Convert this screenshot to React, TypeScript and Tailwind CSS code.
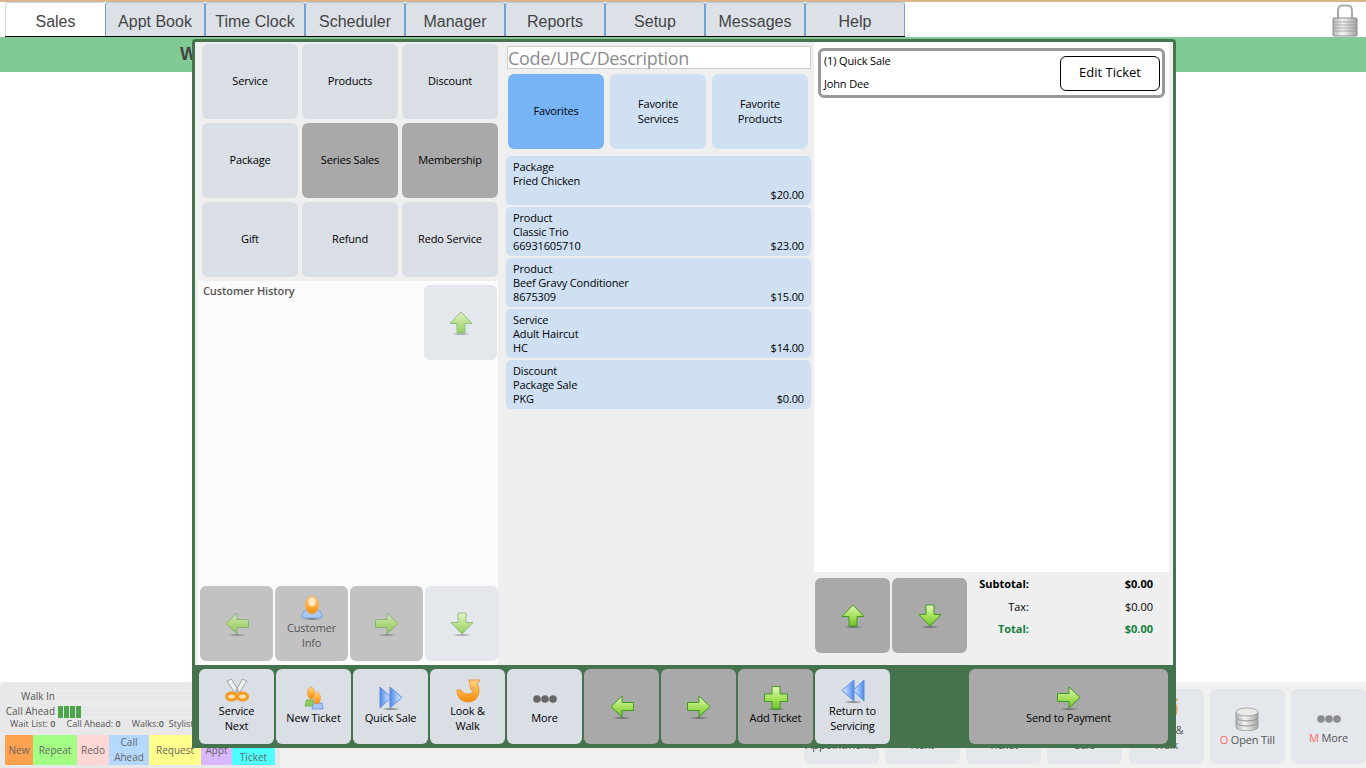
import type { ReactNode } from "react";

const font = "font-['Open_Sans',sans-serif]";

// shared gradients for the glossy icons
function IconDefs() {
  return (
    <svg className="block w-0 h-0" aria-hidden="true">
      <defs>
        <linearGradient id="gh" x1="0" y1="0" x2="0" y2="1">
          <stop offset="0" stopColor="#e2f8ba" />
          <stop offset="0.55" stopColor="#a4e05a" />
          <stop offset="1" stopColor="#72c02c" />
        </linearGradient>
        <linearGradient id="bl" x1="0" y1="0" x2="1" y2="0">
          <stop offset="0" stopColor="#4f86e8" />
          <stop offset="0.6" stopColor="#a9c9fa" />
          <stop offset="1" stopColor="#dce9fd" />
        </linearGradient>
        <linearGradient id="or" x1="0" y1="0" x2="0" y2="1">
          <stop offset="0" stopColor="#ffd08a" />
          <stop offset="0.55" stopColor="#ffae34" />
          <stop offset="1" stopColor="#f08a14" />
        </linearGradient>
        <linearGradient id="sv" x1="0" y1="0" x2="1" y2="0">
          <stop offset="0" stopColor="#b5b5b5" />
          <stop offset="0.4" stopColor="#f4f4f4" />
          <stop offset="1" stopColor="#a5a5a5" />
        </linearGradient>
        <radialGradient id="sh">
          <stop offset="0" stopColor="#444" stopOpacity="0.8" />
          <stop offset="1" stopColor="#444" stopOpacity="0" />
        </radialGradient>
      </defs>
    </svg>
  );
}

const shadow = <ellipse cx="12" cy="23" rx="10" ry="1.3" fill="url(#sh)" />;

const arrowPaths = {
  up: "M12 1 L23 12.5 L16 12.5 L16 22 L8 22 L8 12.5 L1 12.5 Z",
  down: "M8 1 L16 1 L16 10.5 L23 10.5 L12 22 L1 10.5 L8 10.5 Z",
  left: "M12 1 L12 7.5 L23.5 7.5 L23.5 15.5 L12 15.5 L12 22 L1 11.5 Z",
  right: "M12 1 L23 11.5 L12 22 L12 15.5 L.5 15.5 L.5 7.5 L12 7.5 Z",
};

function Arrow({ dir, dim }: { dir: keyof typeof arrowPaths; dim?: boolean }) {
  return (
    <svg width="24" height="24" viewBox="0 0 24 24" className={dim ? "opacity-70" : ""}>
      {shadow}
      <path d={arrowPaths[dir]} fill="url(#gh)" stroke={dim ? "#6fae5c" : "#3f9a1e"} strokeWidth="1" strokeLinejoin="round" />
    </svg>
  );
}

function Scissors() {
  return (
    <svg width="24" height="24" viewBox="0 0 24 24">
      <path d="M2 2 L6.5 0 L13.5 12 L10 14 Z M22 2 L17.5 0 L10.5 12 L14 14 Z" fill="#f0f0f0" stroke="#a2a2a2" strokeWidth="1" />
      <ellipse cx="6.5" cy="17.5" rx="5" ry="3.6" fill="#ffe2b0" stroke="#f59a22" strokeWidth="3" />
      <ellipse cx="17.5" cy="17.5" rx="5" ry="3.6" fill="#ffe2b0" stroke="#f59a22" strokeWidth="3" />
    </svg>
  );
}

function Person() {
  return (
    <svg width="24" height="25" viewBox="0 0 24 25">
      <path d="M2 23 C2 18 4 15 8 14 L16 14 C20 15 22 18 22 23 Z" fill="#a9c8f5" stroke="#7fa3dc" strokeWidth="1" />
      <ellipse cx="12" cy="10" rx="6.5" ry="9" fill="url(#or)" stroke="#f2a04a" strokeWidth="0.7" />
      <ellipse cx="12" cy="7" rx="3.6" ry="4.6" fill="#ffe9c9" />
      <ellipse cx="12" cy="24" rx="10" ry="1" fill="url(#sh)" />
    </svg>
  );
}

function NewTicketIcon() {
  return (
    <svg width="24" height="24" viewBox="0 0 24 24">
      <path d="M3 20 L4.5 14 L11 14 L12 20 Z" fill="#8ed05a" stroke="#5fa335" strokeWidth="0.7" />
      <ellipse cx="9" cy="7" rx="3.4" ry="6" fill="url(#or)" stroke="#e98a20" strokeWidth="0.5" />
      <path d="M10 23 L11.5 17 L20 17 L21 23 Z" fill="#a9c8f5" stroke="#5f8fdc" strokeWidth="0.8" />
      <ellipse cx="15" cy="12" rx="3.4" ry="6" fill="url(#or)" stroke="#e98a20" strokeWidth="0.5" />
    </svg>
  );
}

function DoubleArrow({ flip }: { flip?: boolean }) {
  return (
    <svg width="24" height="24" viewBox="0 0 24 24" className={flip ? "-scale-x-100" : ""}>
      {shadow}
      <path d="M1 1 L12 11.5 L1 22 Z" fill="url(#bl)" stroke="#5d8fe3" strokeWidth="1" strokeLinejoin="round" />
      <path d="M11 1 L23 11.5 L11 22 Z" fill="url(#bl)" stroke="#5d8fe3" strokeWidth="1" strokeLinejoin="round" />
    </svg>
  );
}

function LookWalkIcon() {
  return (
    <svg width="24" height="24" viewBox="0 0 24 24">
      <path d="M1 11 C1 19 6 23 12 23 C19 23 23 18 23 11 C23 8 22 6 21 5 L24 1 L13 1 L15 11 L17 8 C18 12 16 15 12 15 C8 15 6 13 5 11 Z" fill="url(#or)" stroke="#ee8a22" strokeWidth="0.8" strokeLinejoin="round" />
    </svg>
  );
}

function Dots() {
  return (
    <svg width="24" height="10" viewBox="0 0 24 10" className="block">
      <circle cx="4" cy="5" r="3.8" fill="#666" />
      <circle cx="12" cy="5" r="3.8" fill="#666" />
      <circle cx="20" cy="5" r="3.8" fill="#666" />
    </svg>
  );
}

function PlusIcon() {
  return (
    <svg width="24" height="24" viewBox="0 0 24 24">
      {shadow}
      <path d="M8 0.5 H16 V8 H23.5 V15.5 H16 V23 H8 V15.5 H0.5 V8 H8 Z" fill="url(#gh)" stroke="#3f9a1e" strokeWidth="1" />
    </svg>
  );
}

function DbIcon() {
  return (
    <svg width="24" height="26" viewBox="0 0 24 26">
      {[17, 12, 7].map((y) => (
        <g key={y}>
          <path d={`M1 ${y} V${y + 5} C1 ${y + 10} 23 ${y + 10} 23 ${y + 5} V${y} Z`} fill="url(#sv)" stroke="#8f8f8f" strokeWidth="0.7" />
          <ellipse cx="12" cy={y} rx="11" ry="4" fill="#eaeaea" stroke="#8f8f8f" strokeWidth="0.7" />
        </g>
      ))}
    </svg>
  );
}

function LockIcon() {
  return (
    <svg width="26" height="33" viewBox="0 0 26 33">
      <path d="M6 15 V7 Q6 1.5 10 1.5 H16 Q20 1.5 20 7 V15" fill="none" stroke="#a8a8a8" strokeWidth="2" />
      <rect x="1" y="14" width="24" height="18" rx="1" fill="url(#sv)" stroke="#777" strokeWidth="0.8" />
      <path d="M1 18 H25 M1 21 H25 M1 24 H25 M1 27 H25" stroke="#9a9a9a" strokeWidth="0.8" />
    </svg>
  );
}

function Btn({
  children,
  tone = "base",
  className = "",
}: {
  children: ReactNode;
  tone?: "base" | "dark" | "pale" | "mid" | "blue" | "blueOn";
  className?: string;
}) {
  const tones = {
    base: "bg-[#dadee5] text-black",
    dark: "bg-[#a9a9a9] text-black",
    pale: "bg-[#e4e7ec] text-[#555]",
    mid: "bg-[#c2c2c2] text-[#555]",
    blue: "bg-[#cfe0f3] text-black",
    blueOn: "bg-[#77b4f6] text-black",
  };
  return (
    <div
      className={`flex flex-col items-center justify-center rounded-[6px] pb-[2px] text-[11px] leading-[15px] tracking-[-0.15px] text-center ${tones[tone]} ${className}`}
    >
      {children}
    </div>
  );
}

const tabs = ["Sales", "Appt Book", "Time Clock", "Scheduler", "Manager", "Reports", "Setup", "Messages", "Help"];

const menuButtons: { label: string; tone?: "dark" }[] = [
  { label: "Service" },
  { label: "Products" },
  { label: "Discount" },
  { label: "Package" },
  { label: "Series Sales", tone: "dark" },
  { label: "Membership", tone: "dark" },
  { label: "Gift" },
  { label: "Refund" },
  { label: "Redo Service" },
];

const items = [
  { kind: "Package", name: "Fried Chicken", code: "", price: "$20.00" },
  { kind: "Product", name: "Classic Trio", code: "66931605710", price: "$23.00" },
  { kind: "Product", name: "Beef Gravy Conditioner", code: "8675309", price: "$15.00" },
  { kind: "Service", name: "Adult Haircut", code: "HC", price: "$14.00" },
  { kind: "Discount", name: "Package Sale", code: "PKG", price: "$0.00" },
];

const legend = [
  { label: "New", cls: "w-[28px] bg-[#ffa24f]", pt: "" },
  { label: "Repeat", cls: "w-[44px] bg-[#a3ff84]", pt: "" },
  { label: "Redo", cls: "w-[32px] bg-[#ffd6d6]", pt: "" },
  { label: "Call Ahead", cls: "w-[40px] bg-[#b5d8ff]", pt: "" },
  { label: "Request", cls: "w-[52px] bg-[#ffff8c]", pt: "" },
  { label: "Appt", cls: "w-[31px] bg-[#d9b8ff]", pt: "" },
  { label: "Ticket", cls: "w-[43px] bg-[#4dffff]", pt: "pt-[15px]" },
];

const behindButtons = ["Appointments", "Next", "Ticket", "Sale"];

export default function App() {
  return (
    <div className={`relative w-[1366px] h-[768px] overflow-hidden bg-white flex flex-col ${font}`}>
      <IconDefs />

      {/* Top tabs */}
      <div className="h-[37px] shrink-0 border-t-2 border-[#d9b68c] flex pl-[5px] relative">
        <div className="flex border-b border-black h-[35px]">
          {tabs.map((t, i) => (
            <div
              key={t}
              className={[
                "w-[100px] flex items-center justify-center pt-[4px] rounded-t-[3px] text-[16px] text-[#444] font-['Liberation_Sans',sans-serif]",
                i === 0
                  ? "bg-white border-t border-l border-[#cfd8e3]"
                  : "bg-[#dce1e8] border-x border-l-[#6fa3d3] border-r-[#6fa3d3] border-t border-t-[#b9cbe0]",
              ].join(" ")}
            >
              {t}
            </div>
          ))}
        </div>
        <div className="ml-auto mr-[8px] mt-[2px]">
          <LockIcon />
        </div>
      </div>

      {/* Green band */}
      <div className="h-[35px] shrink-0 bg-[#7fcb93] pl-[180px] flex items-center text-[18px] font-bold text-[#444] font-['Liberation_Sans',sans-serif]">
        Welcome
      </div>

      <div className="flex-1" />

      {/* Bottom status area, mostly behind the dialog */}
      <div className="h-[86px] shrink-0 bg-[#f1f1ef] flex">
        <div className="w-[280px] bg-[#e8e8e8] rounded-tl-[6px] text-[10px] text-[#555] flex flex-col">
          <div className="flex items-center mt-[7px] h-[14px]">
            <span className="w-[55px] text-right">Walk In</span>
            <div className="flex-1 h-[13px] border border-[#eeeeee]" />
          </div>
          <div className="flex items-center mt-px h-[14px]">
            <span className="w-[55px] text-right">Call Ahead</span>
            <div className="flex-1 h-[13px] border border-[#eeeeee] flex gap-px pl-[2px]">
              <div className="w-[5px] h-[12px] bg-[#4ca64c]" />
              <div className="w-[5px] h-[12px] bg-[#4ca64c]" />
              <div className="w-[5px] h-[12px] bg-[#4ca64c]" />
              <div className="w-[5px] h-[12px] bg-[#4ca64c]" />
            </div>
          </div>
          <div className="flex pl-[10px] gap-[11px] whitespace-nowrap h-[12px] items-center text-[9px]">
            <span>Wait List: <b className="font-semibold">0</b></span>
            <span>Call Ahead: <b className="font-semibold">0</b></span>
            <span>Walks:<b className="font-semibold">0</b></span>
            <span className="-ml-[6px]">Stylists</span>
          </div>
          <div className="flex pl-[5px] mt-[5px] h-[30px]">
            {legend.map((l) => (
              <div key={l.label} className={`${l.cls} ${l.pt} flex items-center justify-center text-center leading-[15px] text-[#666]`}>
                {l.label}
              </div>
            ))}
          </div>
        </div>
        <div className="flex-1 flex gap-[6.25px] pl-[524px] pt-[7px]">
          {behindButtons.map((b) => (
            <Btn key={b} tone="pale" className="w-[75px] h-[75px] justify-end !pb-[12px]">
              {b}
            </Btn>
          ))}
          <Btn tone="pale" className="w-[75px] h-[75px] justify-end !pb-[12px] items-end">
            <span className="w-[75px] flex justify-center">
              <LookWalkIcon />
            </span>
            <span className="w-[75px]">Look &amp;</span>
            <span className="w-[75px]">Walk</span>
          </Btn>
          <Btn tone="pale" className="w-[75px] h-[75px]">
            <DbIcon />
            <span className="mt-[1px]"><span className="text-[#f66]">O</span> Open Till</span>
          </Btn>
          <Btn tone="pale" className="w-[75px] h-[75px]">
            <span className="opacity-70 mt-[7px] mb-[6px]"><Dots /></span>
            <span><span className="text-[#f66]">M</span> More</span>
          </Btn>
        </div>
      </div>

      {/* Sale dialog */}
      <div className="absolute left-[192px] top-[39px] w-[984px] h-[709px] border-[3px] border-[#44734e] rounded-t-[4px] bg-[#efefef] flex flex-col">
        <div className="h-[623px] flex">
          {/* Left column */}
          <div className="w-[311px] shrink-0 flex flex-col">
            <div className="grid grid-cols-[96px_96px_96px] auto-rows-[75px] gap-x-[4px] gap-y-[4px] pl-[7px] pt-[2px]">
              {menuButtons.map((m) => (
                <Btn key={m.label} tone={m.tone ?? "base"}>
                  {m.label}
                </Btn>
              ))}
            </div>
            <div className="ml-[3px] mt-[4px] w-[300px] flex-1 bg-[#fbfbfb] flex flex-col pl-[2px] pb-[4px]">
              <div className="flex justify-between pr-[1px] pt-[4px]">
                <span className="text-[11px] font-semibold text-[#555] pl-[3px] leading-[12px] tracking-[-0.1px]">Customer History</span>
                <Btn tone="pale" className="w-[73px] h-[75px] !pb-0">
                  <Arrow dir="up" dim />
                </Btn>
              </div>
              <div className="mt-auto flex gap-[2px]">
                <Btn tone="mid" className="w-[73px] h-[75px] !pb-0">
                  <Arrow dir="left" dim />
                </Btn>
                <Btn tone="mid" className="w-[73px] h-[75px]">
                  <Person />
                  <span>Customer</span>
                  <span>Info</span>
                </Btn>
                <Btn tone="mid" className="w-[73px] h-[75px] !pb-0">
                  <Arrow dir="right" dim />
                </Btn>
                <Btn tone="pale" className="w-[73px] h-[75px] !pb-0">
                  <Arrow dir="down" dim />
                </Btn>
              </div>
            </div>
          </div>

          {/* Middle column */}
          <div className="w-[308px] shrink-0 flex flex-col">
            <div className="ml-[1px] mt-[4px] w-[304px] h-[23px] bg-white border border-[#ccc] text-[18px] leading-[22px] tracking-[-0.35px] text-[#8c8c8c]">
              Code/UPC/Description
            </div>
            <div className="flex gap-[6px] ml-[2px] mt-[5px]">
              <Btn tone="blueOn" className="w-[96px] h-[75px]">Favorites</Btn>
              <Btn tone="blue" className="w-[96px] h-[75px]">Favorite<br />Services</Btn>
              <Btn tone="blue" className="w-[96px] h-[75px]">Favorite<br />Products</Btn>
            </div>
            <div className="flex flex-col gap-[2px] mt-[7px] w-[305px]">
              {items.map((it) => (
                <div key={it.kind + it.name} className="h-[49px] bg-[#cfe0f3] rounded-[5px] px-[7px] pt-[4px] text-[11px] leading-[14px] tracking-[-0.15px] text-black">
                  <div>{it.kind}</div>
                  <div>{it.name}</div>
                  <div className="flex justify-between">
                    <span>{it.code}</span>
                    <span>{it.price}</span>
                  </div>
                </div>
              ))}
            </div>
          </div>

          {/* Right column */}
          <div className="flex-1 flex flex-col">
            <div className="w-[355px] h-[530px] bg-white pl-[4px] pt-[6px]">
              <div className="w-[347px] h-[50px] border-[3px] border-[#999] rounded-[6px] flex items-center justify-between pl-[3px] pr-[2px] text-[11px] tracking-[-0.15px] text-black">
                <div className="flex flex-col gap-[8px] leading-[15px] pb-[2px]">
                  <span>(1) Quick Sale</span>
                  <span>John Dee</span>
                </div>
                <div className="w-[100px] h-[35px] bg-white border border-black rounded-[6px] flex items-center justify-center text-[13px] tracking-normal">
                  Edit Ticket
                </div>
              </div>
            </div>
            <div className="flex mt-[6px] pl-[1px]">
              <div className="flex gap-[2px]">
                <Btn tone="dark" className="w-[75px] h-[75px] !pb-0">
                  <Arrow dir="up" />
                </Btn>
                <Btn tone="dark" className="w-[75px] h-[75px] !pb-0">
                  <Arrow dir="down" />
                </Btn>
              </div>
              <div className="w-[186px] text-[11px] grid grid-cols-[62px_124px] grid-rows-[23px_22px_22px] text-black items-center -mt-[5px] h-[67px]">
                <span className="text-right font-bold">Subtotal:</span>
                <span className="text-right font-bold">$0.00</span>
                <span className="text-right">Tax:</span>
                <span className="text-right">$0.00</span>
                <span className="text-right font-bold text-[#15803d]">Total:</span>
                <span className="text-right font-bold text-[#15803d]">$0.00</span>
              </div>
            </div>
          </div>
        </div>

        {/* Dialog action bar */}
        <div className="flex-1 bg-[#44734e] flex gap-[2px] pl-[4px] pr-[5px] pt-[4px]">
          <Btn className="w-[75px] h-[75px]">
            <Scissors />
            <span>Service</span>
            <span>Next</span>
          </Btn>
          <Btn className="w-[75px] h-[75px]">
            <NewTicketIcon />
            <span>New Ticket</span>
          </Btn>
          <Btn className="w-[75px] h-[75px]">
            <DoubleArrow />
            <span>Quick Sale</span>
          </Btn>
          <Btn className="w-[75px] h-[75px]">
            <LookWalkIcon />
            <span>Look &amp;</span>
            <span>Walk</span>
          </Btn>
          <Btn className="w-[75px] h-[75px]">
            <span className="mb-[6px] mt-[8px]"><Dots /></span>
            <span>More</span>
          </Btn>
          <Btn tone="dark" className="w-[75px] h-[75px] !pb-0">
            <Arrow dir="left" />
          </Btn>
          <Btn tone="dark" className="w-[75px] h-[75px] !pb-0">
            <Arrow dir="right" />
          </Btn>
          <Btn tone="dark" className="w-[75px] h-[75px]">
            <PlusIcon />
            <span>Add Ticket</span>
          </Btn>
          <Btn className="w-[75px] h-[75px]">
            <DoubleArrow flip />
            <span>Return to</span>
            <span>Servicing</span>
          </Btn>
          <Btn tone="dark" className="w-[199px] h-[75px] ml-[77px]">
            <Arrow dir="right" />
            <span>Send to Payment</span>
          </Btn>
        </div>
      </div>
    </div>
  );
}
